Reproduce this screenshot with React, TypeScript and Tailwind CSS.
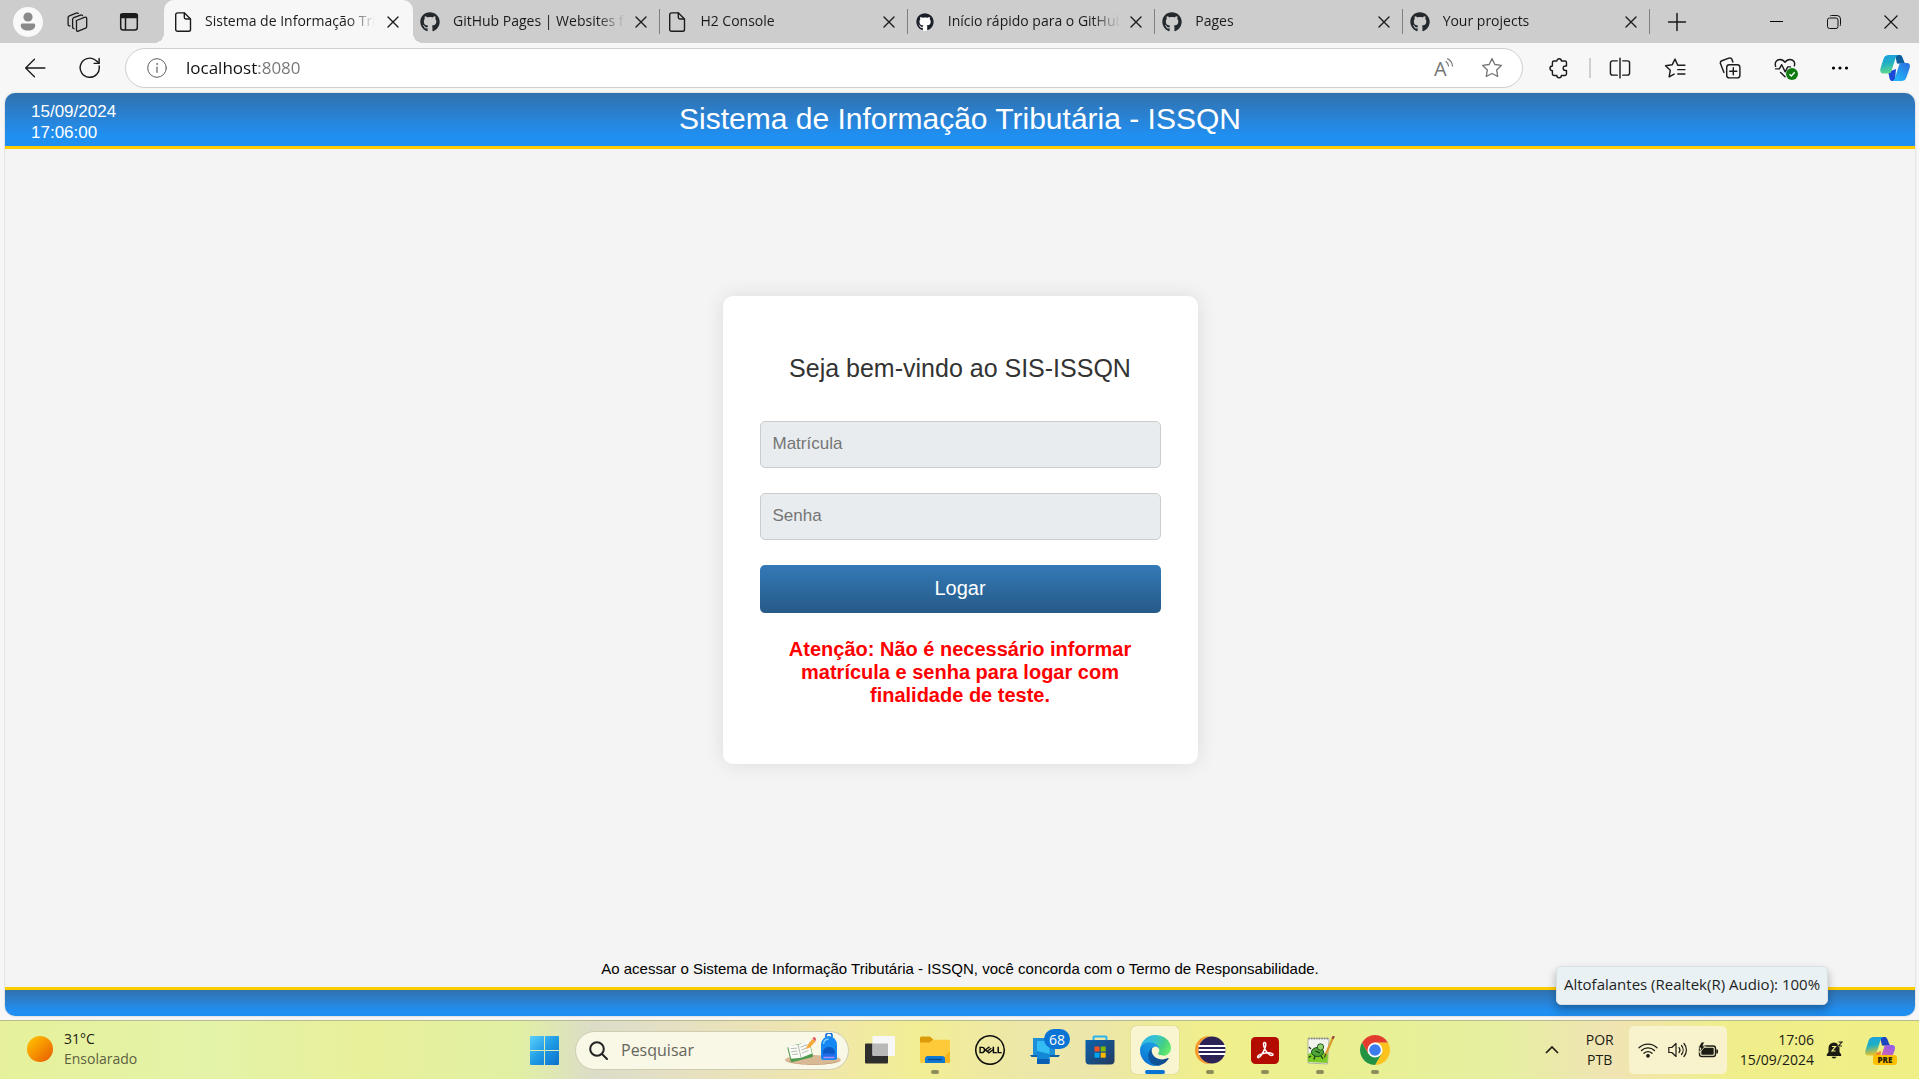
import React from "react";
import { FaGithub } from "react-icons/fa";
import { SiDell } from "react-icons/si";

const UI = "font-['Segoe_UI','Open_Sans',sans-serif]";

/* ---------- browser icons ---------- */

type IconProps = { size?: number; children: React.ReactNode; width?: number };

function Line({ size = 20, width = 1.3, children }: IconProps) {
  return (
    <svg
      width={size}
      height={size}
      viewBox="0 0 20 20"
      fill="none"
      stroke="currentColor"
      strokeWidth={width}
      strokeLinecap="round"
      strokeLinejoin="round"
      aria-hidden="true"
    >
      {children}
    </svg>
  );
}

const DocIcon = () => (
  <Line width={1.4}>
    <path d="M4.5 .9h7l6 6v10.6a1.8 1.8 0 0 1-1.8 1.8H4.5a1.8 1.8 0 0 1-1.8-1.8V2.7A1.8 1.8 0 0 1 4.5 .9z" />
    <path d="M11.3 1v4.3a1.700 1.700 0 0 0 1.700 1.700h4.300" />
  </Line>
);

const CloseIcon = () => (
  <Line width={1.4}>
    <path d="M5 5l10 10M15 5L5 15" />
  </Line>
);

const CopilotIcon = ({ id, pink = false }: { id: string; pink?: boolean }) => (
  <svg width="30" height="28" viewBox="0 0 30 28" aria-hidden="true">
    <defs>
      <linearGradient id={`${id}a`} x1="0" y1="0" x2="0.2" y2="1">
        <stop offset="0" stopColor="#1b9de2" />
        <stop offset="0.5" stopColor="#1fb0c4" />
        <stop offset="1" stopColor={pink ? "#e8c22c" : "#5fd68c"} />
      </linearGradient>
      <linearGradient id={`${id}b`} x1="1" y1="0" x2="0.2" y2="1">
        <stop offset="0" stopColor={pink ? "#8a5cf0" : "#2a6de0"} />
        <stop offset="1" stopColor={pink ? "#f0699a" : "#21b8f8"} />
      </linearGradient>
    </defs>
    <path d="M15 1h5c3 0 3.5 8 6 9l-9-.5z" fill={pink ? "#1c45c0" : "#0c5f9c"} />
    <path d="M8 18l8-3-1 12h-3c-3 0-2.5-6-4-9z" fill={pink ? "#f08a2c" : "#1a49d8"} />
    <path d="M9 1h9.5c-2 .6-2.7 2-3.3 4L11.5 17c-.6 1.8-1.5 2.5-3.5 2.5H3.5C.5 19.5-.2 17 .6 14L3.5 5C4.5 2 6 1 9 1z" fill={`url(#${id}a)`} />
    <path d="M21 27h-9c2-.6 2.7-2 3.3-4L19 11.5c.6-1.8 1.5-2.5 3.5-2.5H27c3 0 3.4 2.5 2.5 5.5L26.500 23c-1 3-2.5 4-5.5 4z" fill={`url(#${id}b)`} />
  </svg>
);

/* ---------- tabs ---------- */

type Tab = { title: string; icon: "doc" | "github" | "github-light" };

const TABS: Tab[] = [
  { title: "GitHub Pages | Websites for", icon: "github" },
  { title: "H2 Console", icon: "doc" },
  { title: "Início rápido para o GitHub", icon: "github-light" },
  { title: "Pages", icon: "github" },
  { title: "Your projects", icon: "github" },
];

function TabTitle({ children }: { children: React.ReactNode }) {
  return (
    <span className="min-w-0 flex-1 overflow-hidden pb-0.5 text-left text-[14px] leading-5 whitespace-nowrap text-[#1b1b1b] [mask-image:linear-gradient(to_right,#000_calc(100%-28px),transparent)]">
      {children}
    </span>
  );
}

function TabFavicon({ icon }: { icon: Tab["icon"] }) {
  if (icon === "doc") return <DocIcon />;
  if (icon === "github-light")
    return (
      <span className="flex size-5 items-center justify-center">
        <span className="flex size-[18px] items-center justify-center rounded-full bg-white">
          <FaGithub size={18} color="#1b1f2a" />
        </span>
      </span>
    );
  return <FaGithub size={20} color="#24292e" />;
}

function TabStrip() {
  return (
    <header className={`flex h-[43px] shrink-0 bg-[#cdcdcd] text-[#1b1b1b] ${UI}`}>
      <div className="flex w-[164px] shrink-0 items-center pl-[13px]">
        <button aria-label="Perfil" className="flex size-[30px] items-center justify-center rounded-full bg-[#f9f9f9]">
          <svg width="16" height="20" viewBox="0 0 16 20" fill="#8a8a8a" aria-hidden="true">
            <circle cx="8" cy="5" r="4.6" />
            <path d="M2.5 11.5h11c1 0 1.700.7 1.700 1.700 0 3.300-3 5.300-7.200 5.300S.8 16.500.8 13.200c0-1 .7-1.700 1.700-1.700z" />
          </svg>
        </button>
        <button aria-label="Espaços de trabalho" className="ml-[22px] flex size-6 items-center justify-center">
          <svg width="22" height="22" viewBox="0 0 22 22" fill="none" stroke="currentColor" strokeWidth="1.3" strokeLinejoin="round" aria-hidden="true">
            <path d="M10.500 9.500l8.500-3.300a1.200 1.200 0 0 1 1.700 1.100v8.200c0 .8-.4 1.400-1.100 1.700l-7.400 3a1.200 1.200 0 0 1-1.700-1.100v-8c0-.8-.6-1.300 0-1.600z" />
            <path d="M8.500 17.500c-1 .2-1.900-.3-1.900-1.300V8.500c0-.8.500-1.500 1.200-1.800l6.700-2.600c1-.4 1.900 0 2.100 1" />
            <path d="M4.500 14.800c-1.300.3-2.400-.3-2.400-1.400V6.600c0-.8.500-1.500 1.200-1.800l7-2.700c1-.4 2-.1 2.300.8" />
          </svg>
        </button>
        <button aria-label="Menu de ações da guia" className="ml-7 flex size-6 items-center justify-center">
          <Line size={20} width={1.5}>
            <rect x="1.7" y="1.7" width="16.6" height="16.2" rx="2.5" />
            <path d="M1.700 2.500h16.600v3H1.700z" fill="currentColor" />
            <path d="M6.500 6v11.500" />
          </Line>
        </button>
      </div>

      <nav aria-label="Guias" className="flex w-[1486px] min-w-0 shrink">
        <div className="relative flex w-[249px] shrink-0 items-center rounded-t-[10px] bg-[#f7f7f7] pr-[10px] pl-[9px] before:absolute before:bottom-0 before:-left-[10px] before:size-[10px] before:bg-[radial-gradient(circle_at_0_0,transparent_10px,#f7f7f7_10px)] after:absolute after:-right-[10px] after:bottom-0 after:size-[10px] after:bg-[radial-gradient(circle_at_100%_0,transparent_10px,#f7f7f7_10px)]">
          <button className="flex min-w-0 flex-1 items-center gap-3">
            <DocIcon />
            <TabTitle>Sistema de Informação Trib</TabTitle>
          </button>
          <button aria-label="Fechar guia" className="ml-2">
            <CloseIcon />
          </button>
        </div>
        {TABS.map((t) => (
          <div key={t.title} className="flex min-w-0 flex-1 items-center pl-[7px]">
            <button className="flex min-w-0 flex-1 items-center gap-[13px]">
              <TabFavicon icon={t.icon} />
              <TabTitle>{t.title}</TabTitle>
            </button>
            <button aria-label="Fechar guia" className="mr-2 ml-[6px]">
              <CloseIcon />
            </button>
            <span className="h-[25px] w-px bg-[#808080]" />
          </div>
        ))}
      </nav>

      <button aria-label="Nova guia" className="ml-[17px] flex shrink-0 items-center">
        <Line size={20} width={1.5}>
          <path d="M10 1.500v17M1.500 10h17" />
        </Line>
      </button>
      <div className="ml-auto flex shrink-0">
        <button aria-label="Minimizar" className="flex w-[58px] items-center justify-center">
          <span className="h-px w-[13px] bg-black" />
        </button>
        <button aria-label="Restaurar" className="flex w-[57px] items-center justify-center">
          <svg width="14" height="14" viewBox="0 0 14 14" fill="none" stroke="#111" aria-hidden="true">
            <rect x=".5" y="3" width="10.5" height="10.5" rx="2" />
            <path d="M3 .9C3.400.6 4 .5 4.600.5h5.400a3.500 3.500 0 0 1 3.500 3.500v5.400c0 .6-.1 1.200-.4 1.600" />
          </svg>
        </button>
        <button aria-label="Fechar" className="flex w-[57px] items-center justify-center">
          <svg width="14" height="14" viewBox="0 0 14 14" stroke="#111" strokeWidth="1.100" aria-hidden="true">
            <path d="M.5.5l13 13M13.500.5l-13 13" />
          </svg>
        </button>
      </div>
    </header>
  );
}

/* ---------- toolbar ---------- */

function ToolButton({ label, children }: { label: string; children: React.ReactNode }) {
  return (
    <button aria-label={label} className="flex h-10 w-11 shrink-0 items-center justify-center">
      {children}
    </button>
  );
}

const STAR = "M10 1.500l2.600 5.300 5.900.9-4.300 4.100 1 5.900L10 15l-5.200 2.700 1-5.900L1.500 7.700l5.900-.9z";

function Toolbar() {
  return (
    <div className={`flex h-[50px] shrink-0 items-center bg-[#f7f7f7] pr-0.5 pl-[13px] text-[#1b1b1b] ${UI}`}>
      <ToolButton label="Voltar">
        <Line size={22} width={1.2}>
          <path d="M19 10H1.500M9.500 2L1.500 10l8 8" />
        </Line>
      </ToolButton>
      <div className="w-[11px] shrink-0" />
      <ToolButton label="Atualizar">
        <Line size={22} width={1.3}>
          <path d="M18.300 8.200A8.700 8.700 0 1 1 14.800 2.700L18 5.300" />
          <path d="M18.300 1.300v4.500h-4.500" />
        </Line>
      </ToolButton>
      <div className="ml-[13px] flex h-10 min-w-0 flex-1 items-center rounded-full border border-[#cfcfcf] bg-white pr-[19px] pl-[21px]">
        <button aria-label="Informações do site" className="text-[#5c5c5c]">
          <Line size={20} width={1}>
            <circle cx="10" cy="10" r="9.3" />
            <path d="M10 9v5.300" strokeWidth="1.200" />
            <circle cx="10" cy="6" r=".4" strokeWidth=".9" />
          </Line>
        </button>
        <input
          aria-label="Barra de endereços"
          defaultValue="localhost:8080"
          className="ml-[19px] min-w-0 flex-1 bg-linear-to-r from-[#111] from-[72px] to-[#757575] to-[73px] bg-clip-text text-[17px] leading-6 text-transparent outline-none"
        />
        <button aria-label="Ler em voz alta" className="mr-[27px] text-[#767676]">
          <svg width="20" height="20" viewBox="0 0 20 20" fill="none" stroke="currentColor" strokeWidth="1.200" strokeLinecap="round" aria-hidden="true">
            <text x="0" y="17.5" fontSize="20" fontFamily="'Open Sans', sans-serif" fill="currentColor" stroke="none">
              A
            </text>
            <path d="M12 3.500a6 6 0 0 1 2.500 4.500M13.500.8A9 9 0 0 1 18.500 8" />
          </svg>
        </button>
        <button aria-label="Adicionar aos favoritos" className="text-[#767676]">
          <Line size={22} width={1.2}>
            <path d={STAR} />
          </Line>
        </button>
      </div>
      <div className="w-[14px] shrink-0" />
      <ToolButton label="Extensões">
        <Line size={22} width={1.3}>
          <path d="M8 3.700a2.100 2.100 0 0 1 4.200 0H15.500a1.300 1.300 0 0 1 1.300 1.300v3.200h-1a2 2 0 0 0 0 4h1v3.300a1.300 1.300 0 0 1-1.300 1.300h-3.300a2.100 2.100 0 0 1-4.200 0H5.500A1.500 1.500 0 0 1 4 15.300v-2.800a2.200 2.200 0 0 1 0-4.400V5.200a1.500 1.500 0 0 1 1.500-1.500z" />
        </Line>
      </ToolButton>
      <span className="mr-[7px] ml-2 h-5 w-0.5 shrink-0 bg-[#cfcfcf]" />
      <div className="flex shrink-0 gap-[11px]">
        <ToolButton label="Tela dividida">
          <Line size={22} width={1.3}>
            <path d="M10 1v18M7.500 3.500H3.200A1.900 1.900 0 0 0 1.300 5.400v9.200a1.900 1.900 0 0 0 1.900 1.900h4.300M12.500 3.500h4.300a1.900 1.900 0 0 1 1.900 1.900v9.200a1.900 1.900 0 0 1-1.900 1.900h-4.300" />
          </Line>
        </ToolButton>
        <ToolButton label="Favoritos">
          <Line size={22} width={1.3}>
            <path d="M19 7.500h-6.500L10 1.900 7.400 7.100l-6 .9 4.300 4.100-1 6 4.500-2.600M12.500 11.500H19M12.500 15.500H19" />
          </Line>
        </ToolButton>
        <ToolButton label="Coleções">
          <Line size={22} width={1.3}>
            <rect x="7" y="7" width="12" height="12" rx="2.5" />
            <path d="M13 9.800v6.400M9.800 13h6.400M4.500 14L1.400 6.200A2.200 2.200 0 0 1 2.600 3.400L9 1c1.200-.4 2.300.1 2.800 1.200l.8 2.300" />
          </Line>
        </ToolButton>
        <ToolButton label="Desempenho do navegador">
          <span className="relative">
            <Line size={22} width={1.3}>
              <path d="M1.500 8.500C.3 5 2.500 2.200 5.500 2.200c2 0 3.500 1.100 4.500 2.600 1-1.500 2.500-2.600 4.500-2.600 3 0 5 2.600 4 5.800M6 14l4 4M1.500 10.800h3.300L7 7l3.200 6.500L12.500 9H15" />
            </Line>
            <svg width="12" height="12" viewBox="0 0 12 12" className="absolute -right-[2px] -bottom-px" aria-hidden="true">
              <circle cx="6" cy="6" r="6" fill="#107c10" />
              <path d="M3.500 6.300l1.800 1.700 3.400-3.800" fill="none" stroke="#fff" strokeWidth="1.300" />
            </svg>
          </span>
        </ToolButton>
        <ToolButton label="Configurações e mais">
          <svg width="18" height="4" viewBox="0 0 18 4" aria-hidden="true">
            <circle cx="2.500" cy="2" r="1.600" />
            <circle cx="9" cy="2" r="1.600" />
            <circle cx="15.500" cy="2" r="1.600" />
          </svg>
        </ToolButton>
        <ToolButton label="Copilot">
          <CopilotIcon id="bar" />
        </ToolButton>
      </div>
    </div>
  );
}

/* ---------- login page ---------- */

const FIELD =
  "mb-[25px] h-[47px] w-full rounded-[5px] border border-[#ccc] bg-[#e8ecef] px-3 pb-0.5 text-[17px] text-[#333] outline-none placeholder:text-[#757575]";

function LoginPage() {
  return (
    <main className="mr-1 mb-1 ml-[5px] flex flex-1 flex-col overflow-hidden rounded-[10px] bg-[#f4f4f4] font-['Liberation_Sans',Arial,sans-serif] shadow-[0_0_2px_rgba(0,0,0,0.25)]">
      <div className="grid h-14 shrink-0 grid-cols-[1fr_auto_1fr] items-center border-b-[3px] border-[#ffcc00] bg-linear-to-b from-[#3071ae] to-[#1f8ff1] to-80% px-[26px] text-white">
        <time className="w-24 pt-[5px] text-[17px] leading-[21px]">15/09/2024 17:06:00</time>
        <h1 className="pb-0.5 text-[30px] leading-9">Sistema de Informação Tributária - ISSQN</h1>
      </div>

      <section className="flex flex-1 flex-col items-center justify-center">
        <form
          onSubmit={(e) => e.preventDefault()}
          className="w-[475px] rounded-[10px] bg-white px-[37px] pt-[57px] pb-[57px] shadow-[0_0_20px_rgba(0,0,0,0.1)]"
        >
          <h2 className="mb-[38px] text-center text-[25px] leading-[30px] text-[#333]">Seja bem-vindo ao SIS-ISSQN</h2>
          <input aria-label="Matrícula" placeholder="Matrícula" className={FIELD} />
          <input aria-label="Senha" type="password" placeholder="Senha" className={FIELD} />
          <button
            type="submit"
            className="h-12 w-full rounded-[5px] bg-linear-to-b from-[#337ab7] to-[#265a88] pb-0.5 text-[20px] text-white"
          >
            Logar
          </button>
          <p className="mt-[25px] text-center text-[20px] leading-[23px] font-bold text-[#ff0000]">
            Atenção: Não é necessário informar matrícula e senha para logar com finalidade de teste.
          </p>
        </form>
      </section>

      <p className="pt-[49px] pb-[9px] text-center text-[15px] leading-[18px] text-black">
        Ao acessar o Sistema de Informação Tributária - ISSQN, você concorda com o Termo de Responsabilidade.
      </p>
      <footer className="h-[29px] shrink-0 border-t-[3px] border-[#ffcc00] bg-linear-to-b from-[#3071ae] to-[#1f8ff1] to-80%" />
    </main>
  );
}

/* ---------- taskbar icons ---------- */

const WindowsLogo = () => (
  <svg width="29" height="29" viewBox="0 0 29 29" aria-hidden="true">
    <defs>
      <linearGradient id="win" gradientUnits="userSpaceOnUse" x1="0" y1="0" x2="29" y2="29">
        <stop offset="0" stopColor="#5bd0fb" />
        <stop offset="0.5" stopColor="#1f9be4" />
        <stop offset="1" stopColor="#0a6fcb" />
      </linearGradient>
    </defs>
    <path fill="url(#win)" d="M1 0h13v14H0V1a1 1 0 0 1 1-1zM15 0h13a1 1 0 0 1 1 1v13H15zM0 15h14v14H1a1 1 0 0 1-1-1zM15 15h14v13a1 1 0 0 1-1 1H15z" />
  </svg>
);

const SearchArt = () => (
  <svg width="58" height="34" viewBox="0 0 58 34" aria-hidden="true">
    <ellipse cx="29" cy="27" rx="28" ry="5" fill="#d9b896" />
    <path d="M4 28c10 4.500 40 4.500 50 0-6 5-42 5-50 0z" fill="#b98d68" />
    <g transform="rotate(-14 16 20)">
      <rect x="5" y="11" width="23" height="16" rx="1.5" fill="#4e9a4e" />
      <path d="M6 10l10 1.500V25L6 23.500zM27.500 10L16 11.500V25l11.500-1.500z" fill="#fbfbf5" />
      <path d="M16 11.500V25M8 13.500l6 1M8 16.500l6 1M8 19.500l6 1M18 14.500l7-1M18 17.500l7-1M18 20.500l7-1" stroke="#a9b0a9" strokeWidth=".8" />
    </g>
    <path d="M22 16l1.500-4 5-6 3 2.500-5.500 6z" fill="#f6a83a" />
    <path d="M28.500 5.500L30 3.800l2 1.700-.5 3z" fill="#e5525e" />
    <path d="M42 4V2.500a3 2.500 0 0 1 6 0V4" fill="none" stroke="#1672d8" strokeWidth="1.700" />
    <path d="M37 12a8 9 0 0 1 16 0v12.500a2.500 2.500 0 0 1-2.500 2.500h-11a2.500 2.500 0 0 1-2.500-2.500z" fill="#1487f2" />
    <path d="M39 19a6 5 0 0 1 12 0v4H39z" fill="#0b59c4" />
    <path d="M38.500 20.500h13V25h-13z" fill="#1f6fe8" />
    <path d="M39.500 24.500h11" stroke="#b08af5" strokeWidth="1.500" />
    <path d="M39.500 11a5.500 5.500 0 0 1 5-5" stroke="#7fd0ff" strokeWidth="1.300" fill="none" />
  </svg>
);

const TaskViewIcon = () => (
  <svg width="30" height="28" viewBox="0 0 30 28" aria-hidden="true">
    <rect y="7.5" width="23" height="20" rx="1" fill="#2e2e2c" />
    <rect x="7.5" y="0" width="22.5" height="20" rx="1" fill="#f7f7f7" />
    <path d="M7.500 7.500H23V20H8.500a1 1 0 0 1-1-1z" fill="#b9b9b8" />
  </svg>
);

const FolderIcon = () => (
  <svg width="30" height="28" viewBox="0 0 30 28" aria-hidden="true">
    <path d="M0 2a1.500 1.500 0 0 1 1.500-1.500h8.500l3.500 3.300V8H0z" fill="#dc9b09" />
    <path d="M0 6.500h9.500l3.500-2.700h15.500A1.500 1.500 0 0 1 30 5.300V25.500a1.500 1.500 0 0 1-1.500 1.500h-27A1.500 1.500 0 0 1 0 25.500z" fill="#ffca3a" />
    <path d="M30 15v10.500a1.500 1.500 0 0 1-1.500 1.500H18z" fill="#f7b51c" />
    <path d="M5 27v-4a3 3 0 0 1 3-3h14a3 3 0 0 1 3 3v4z" fill="#1079d3" />
    <path d="M8.500 23.500h13" stroke="#0a4a90" strokeWidth="1.300" strokeLinecap="round" />
  </svg>
);

const PhoneLinkIcon = () => (
  <svg width="30" height="28" viewBox="0 0 30 28" aria-hidden="true">
    <path d="M3 2h22v17H3z" fill="#1c8fd8" />
    <path d="M0 19h30l-1.500 2H1.500z" fill="#0b60a8" />
    <rect x="7" y="5" width="12.5" height="23" rx="1" fill="#34bdf4" />
    <path d="M7 15l12.500 3v9a1 1 0 0 1-1 1H8a1 1 0 0 1-1-1z" fill="#1387d6" />
    <path d="M7 23h12.500v4a1 1 0 0 1-1 1H8a1 1 0 0 1-1-1z" fill="#0a5fb4" />
  </svg>
);

const StoreIcon = () => (
  <svg width="30" height="30" viewBox="0 0 30 30" aria-hidden="true">
    <defs>
      <linearGradient id="store" x1="0" y1="0" x2="1" y2="1">
        <stop offset="0" stopColor="#0d63ae" />
        <stop offset="1" stopColor="#233a5e" />
      </linearGradient>
    </defs>
    <path d="M8.500 6V2.500a1 1 0 0 1 1-1h11a1 1 0 0 1 1 1V6" fill="none" stroke="#28b3ee" strokeWidth="2" />
    <path d="M.5 5h29v20.500A4 4 0 0 1 25.500 29.500h-21a4 4 0 0 1-4-4z" fill="url(#store)" />
    <path d="M9.500 11.500h5v5h-5z" fill="#f25022" />
    <path d="M15.700 11.500h5v5h-5z" fill="#7fba00" />
    <path d="M9.500 17.700h5v5h-5z" fill="#00a4ef" />
    <path d="M15.700 17.700h5v5h-5z" fill="#ffb900" />
  </svg>
);

const EdgeIcon = () => (
  <svg width="31" height="31" viewBox="0 0 256 256" aria-hidden="true">
    <defs>
      <linearGradient id="edgeA" x1="0" y1="0.5" x2="1" y2="0.6">
        <stop offset="0" stopColor="#0c59a4" />
        <stop offset="1" stopColor="#114a8b" />
      </linearGradient>
      <linearGradient id="edgeB" x1="0.8" y1="0.1" x2="0.3" y2="1">
        <stop offset="0" stopColor="#1b9de2" />
        <stop offset="0.4" stopColor="#1490df" />
        <stop offset="1" stopColor="#0a6fd0" />
      </linearGradient>
      <linearGradient id="edgeC" x1="0" y1="0.2" x2="1" y2="0.6">
        <stop offset="0" stopColor="#2fb2e8" />
        <stop offset="0.4" stopColor="#35c1d4" />
        <stop offset="0.75" stopColor="#46d080" />
        <stop offset="1" stopColor="#66eb6e" />
      </linearGradient>
    </defs>
    <path fill="url(#edgeA)" d="M230.960 190.210a92.600 92.600 0 0 1-10.480 4.700 101.780 101.780 0 0 1-35.900 6.460c-47.320 0-88.540-32.550-88.540-74.320A31.480 31.480 0 0 1 112.470 99.600c-42.800 1.800-53.800 46.400-53.800 72.530 0 73.880 68.090 81.370 82.760 81.370 7.910 0 19.840-2.300 27-4.560l1.310-.44a128.340 128.340 0 0 0 66.600-52.800 4 4 0 0 0-5.380-5.490z" />
    <path fill="url(#edgeB)" d="M105.730 241.420a79.200 79.200 0 0 1-22.740-21.340 80.720 80.720 0 0 1 29.480-120.480c3.120-1.470 8.450-4.130 15.540-4a32.350 32.350 0 0 1 25.690 13 31.880 31.880 0 0 1 6.360 18.660c0-.21 24.460-79.600-80-79.600-43.900 0-80 41.660-80 78.210a130.150 130.150 0 0 0 12.110 56 128 128 0 0 0 156.380 67.110 75.550 75.550 0 0 1-62.780-8z" />
    <path fill="url(#edgeC)" d="M152.330 148.860c-.81 1.050-3.300 2.500-3.300 5.660 0 2.610 1.700 5.120 4.720 7.230 14.380 10 41.490 8.680 41.560 8.680a59.560 59.560 0 0 0 30.270-8.350 61.380 61.380 0 0 0 30.430-52.880c.26-22.410-8-37.310-11.340-43.910C223.460 23.840 177.720 0 128.010 0a128 128 0 0 0-128 126.200c.48-36.540 36.800-66.050 80-66.050 3.500 0 23.460.34 42 10.070 16.340 8.580 24.900 18.940 30.850 29.210 6.180 10.670 7.280 24.150 7.280 29.520 0 5.370-2.740 13.330-7.810 19.910z" />
  </svg>
);

const EclipseIcon = () => (
  <svg width="31" height="28" viewBox="0 0 31 28" aria-hidden="true">
    <circle cx="14" cy="14" r="14" fill="#f79a2d" />
    <circle cx="18" cy="14" r="14" fill="#f1ee90" />
    <circle cx="17" cy="14" r="13.5" fill="#2c2255" />
    <path d="M3.500 10h27M3.500 14h27M3.500 18h27" stroke="#fff" strokeWidth="1.800" />
  </svg>
);

const AcrobatIcon = () => (
  <svg width="28" height="27" viewBox="0 0 28 27" aria-hidden="true">
    <rect width="28" height="27" rx="4.5" fill="#b30b00" />
    <path
      d="M13.500 5.500c-1.500 0-1.200 3.500.6 7 1.600 3.200 4.700 6 6.600 6 2.200 0 1.800-2.700-3.200-2.700-4.200 0-10 1.700-10.800 3.600-.6 1.700 1.700 2 3.800-1.500 2.200-3.700 4.300-8.300 4.300-10.400 0-1.200-.5-2-1.300-2z"
      fill="none"
      stroke="#fff"
      strokeWidth="1.500"
    />
  </svg>
);

const NotepadIcon = () => (
  <svg width="29" height="29" viewBox="0 0 29 29" aria-hidden="true">
    <path d="M2 2.500h21L21.500 28l-19.500-1z" fill="#f4f4ef" stroke="#9a9a92" strokeWidth=".7" />
    <path d="M2 18c6-3 14-3 20 0l-.6 9-19.400-1z" fill="#7ccb28" />
    <path d="M2.500 2.500h20" stroke="#888" strokeWidth="2" strokeDasharray="1.300 1.300" />
    <ellipse cx="11.5" cy="16" rx="6" ry="4.5" fill="#4ea436" stroke="#1f4a1b" />
    <circle cx="14.5" cy="11" r="3.2" fill="#8dd36a" stroke="#1f4a1b" strokeWidth=".9" />
    <path d="M5 13l-2-2M5 20l-2.500 1.500M15 20l2 3M9 20l-1 3.500M9.500 15l4.500 2" stroke="#173c16" strokeWidth="1.300" />
    <path d="M27 1.500L19.500 19" stroke="#d79a2e" strokeWidth="2.200" />
    <path d="M27.800 0l-1.200 2.800" stroke="#994238" strokeWidth="2.200" />
    <path d="M19.800 18l-1.300 3.500" stroke="#4b3a20" strokeWidth="1.200" />
  </svg>
);

const ChromeIcon = () => (
  <svg width="30" height="30" viewBox="0 0 48 48" aria-hidden="true">
    <path d="M24 12h20.780A24 24 0 0 1 24 48l10.400-18z" fill="#fcc31e" />
    <path d="M13.600 30L3.220 12A24 24 0 0 0 24 48l10.400-18z" fill="#229342" />
    <path d="M3.220 12A24 24 0 0 1 44.780 12H24L13.600 30z" fill="#e33b2e" />
    <circle cx="24" cy="24" r="12" fill="#fff" />
    <circle cx="24" cy="24" r="9.3" fill="#3b7ded" />
  </svg>
);

type App = { name: string; icon: React.ReactNode; state?: "open" | "active"; badge?: string };

const APPS: App[] = [
  { name: "Visão de tarefas", icon: <TaskViewIcon /> },
  { name: "Explorador de Arquivos", icon: <FolderIcon />, state: "open" },
  { name: "Dell", icon: <SiDell size={30} color="#0b0b0b" /> },
  { name: "Vincular ao Celular", icon: <PhoneLinkIcon />, badge: "68" },
  { name: "Microsoft Store", icon: <StoreIcon /> },
  { name: "Microsoft Edge", icon: <EdgeIcon />, state: "active" },
  { name: "Eclipse", icon: <EclipseIcon />, state: "open" },
  { name: "Adobe Acrobat", icon: <AcrobatIcon />, state: "open" },
  { name: "Notepad++", icon: <NotepadIcon />, state: "open" },
  { name: "Google Chrome", icon: <ChromeIcon />, state: "open" },
];

function AppButton({ app }: { app: App }) {
  return (
    <button
      aria-label={app.name}
      className={`relative flex size-12 shrink-0 items-center justify-center rounded-[5px] ${
        app.state === "active" ? "bg-[#f8f5d0] shadow-[0_0_1px_rgba(0,0,0,0.3)]" : ""
      }`}
    >
      {app.icon}
      {app.badge && (
        <span className="absolute top-[3px] right-[-1px] flex h-5 w-[26px] items-center justify-center rounded-full bg-[#0a74d4] text-[14px] text-white">
          {app.badge}
        </span>
      )}
      {app.state && (
        <span
          className={
            app.state === "active"
              ? "absolute bottom-0 h-1 w-5 rounded-full bg-[#0a74d4]"
              : "absolute bottom-0 h-1 w-2 rounded-full bg-[#8c8c5c]"
          }
        />
      )}
    </button>
  );
}

function Taskbar() {
  return (
    <footer
      className={`relative grid h-[59px] shrink-0 grid-cols-[1fr_auto_1fr] items-center border-t border-[#b9bb8e] bg-linear-[90deg,#e7f19b_0%,#e3f3a8_11%,#e9f09a_19%,#e0f0a4_27%,#dcdcc8_31%,#e3dfc6_34%,#efe5ae_42%,#f2ee94_48%,#ede7a8_53%,#ece6aa_57%,#f0ef8b_63%,#e9f092_70%,#e6efa0_78%,#f0e4b4_84%,#f0ee8c_90%,#f0ef85_100%] text-[#1c1c14] ${UI}`}
    >
      <button className="flex items-center gap-[11px] justify-self-start pb-0.5 pl-[27px] text-left">
        <span className="size-[26px] rounded-full bg-linear-135 from-[#ffc800] to-[#e65400]" />
        <span className="flex flex-col text-[14px] leading-5">
          <span>31°C</span>
          <span className="text-[#5c6040]">Ensolarado</span>
        </span>
      </button>

      <div className="flex items-center gap-[7px]">
        <button aria-label="Iniciar" className="flex size-12 items-center justify-center">
          <WindowsLogo />
        </button>
        <label className="flex h-[39px] w-[274px] items-center rounded-full border border-[#cfcdb0] bg-[#f9f7e6] pr-[6px] pl-[13px]">
          <svg width="19" height="19" viewBox="0 0 19 19" fill="none" stroke="#222" strokeWidth="2" strokeLinecap="round" aria-hidden="true">
            <circle cx="8" cy="8" r="6.8" />
            <path d="M13 13l5 5" />
          </svg>
          <input
            aria-label="Pesquisar"
            placeholder="Pesquisar"
            className="ml-[13px] w-0 min-w-0 flex-1 bg-transparent text-[16px] outline-none placeholder:text-[#65655c]"
          />
          <SearchArt />
        </label>
        {APPS.map((a) => (
          <AppButton key={a.name} app={a} />
        ))}
      </div>

      <div className="flex items-center justify-self-end pr-6">
        <button aria-label="Mostrar ícones ocultos" className="mr-[25px]">
          <svg width="14" height="8" viewBox="0 0 14 8" fill="none" stroke="#1c1c14" strokeWidth="1.700" aria-hidden="true">
            <path d="M1 7l6-6 6 6" />
          </svg>
        </button>
        <button className="flex w-8 flex-col items-center text-[14px] leading-5">
          <span>POR</span>
          <span>PTB</span>
        </button>
        <button aria-label="Rede, som e bateria" className="ml-[13px] flex h-12 w-[98px] items-center justify-center gap-[10px] rounded-[5px] bg-[#f8f3cd]">
          <svg width="20" height="16" viewBox="0 0 20 16" fill="none" stroke="#1c1c14" strokeWidth="1.300" strokeLinecap="round" aria-hidden="true">
            <path d="M1 5.700a13 13 0 0 1 18 0M3.500 8.500a9.300 9.300 0 0 1 13 0M6 11.200a5.700 5.700 0 0 1 8 0" />
            <circle cx="10" cy="13.8" r="1.2" fill="#1c1c14" />
          </svg>
          <svg width="20" height="16" viewBox="0 0 20 16" fill="none" stroke="#1c1c14" strokeWidth="1.200" strokeLinecap="round" strokeLinejoin="round" aria-hidden="true">
            <path d="M.8 5.500h3L8 1.500v13l-4.200-4H.8zM11 5.500a4 4 0 0 1 0 5M13.500 3.500a7 7 0 0 1 0 9M16 1.500a10 10 0 0 1 0 13" />
          </svg>
          <svg width="20" height="16" viewBox="0 0 20 16" aria-hidden="true">
            <rect x="1.5" y="4" width="16" height="10.500" rx="2.300" fill="none" stroke="#1c1c14" strokeWidth="1.400" />
            <rect x="3.3" y="5.8" width="12.400" height="7" rx="1" fill="#1c1c14" />
            <path d="M18.300 7.500h1a.7.7 0 0 1 .7.700v2.600a.7.7 0 0 1-.7.700h-1z" fill="#1c1c14" />
            <path d="M3.500 0L0 6h2.800L1.500 10.500l6-6.500H5L6.500 0z" fill="#1c1c14" stroke="#f8f3cd" strokeWidth=".8" />
          </svg>
        </button>
        <button className="ml-[13px] flex flex-col items-end text-[14px] leading-5">
          <span>17:06</span>
          <span>15/09/2024</span>
        </button>
        <button aria-label="Notificações" className="ml-3">
          <svg width="17" height="18" viewBox="0 0 17 18" aria-hidden="true">
            <path d="M8 1.500a5.500 5.500 0 0 0-5.500 5.500v4L.8 13.500V15h14.400v-1.500L13.500 11V7A5.500 5.500 0 0 0 8 1.500zM5.500 15.800a2.600 2.200 0 0 0 5 0z" fill="#1c1c14" />
            <path d="M6 5.500h3.500L6 10h3.500" fill="none" stroke="#f0ef88" strokeWidth="1.200" />
            <path d="M11 0h6v6h-5z" fill="#f0ef88" />
            <path d="M12.500 1h3.500l-3.500 4H16" fill="none" stroke="#1c1c14" strokeWidth="1.100" />
          </svg>
        </button>
        <button aria-label="Copilot" className="relative ml-[22px]">
          <CopilotIcon id="task" pink />
          <span className="absolute right-[-2px] -bottom-px flex h-[10px] w-[24px] items-center justify-center rounded-[3px] bg-[#fcc000] text-[8px] leading-none font-extrabold text-[#2a2200]">
            PRE
          </span>
        </button>
      </div>

      <div
        role="tooltip"
        className="absolute right-[91px] bottom-full mb-4 flex h-[39px] w-[272px] items-center justify-center rounded-[5px] border border-[#d9e0e3] bg-[#e9f1f4] pb-0.5 text-[15px] whitespace-nowrap text-[#1f1f1f] shadow-[0_5px_10px_rgba(0,0,0,0.28)]"
      >
        Altofalantes (Realtek(R) Audio): 100%
      </div>
    </footer>
  );
}

export default function App() {
  return (
    <div className="flex min-h-screen flex-col bg-[#f7f7f7]">
      <TabStrip />
      <Toolbar />
      <LoginPage />
      <Taskbar />
    </div>
  );
}
